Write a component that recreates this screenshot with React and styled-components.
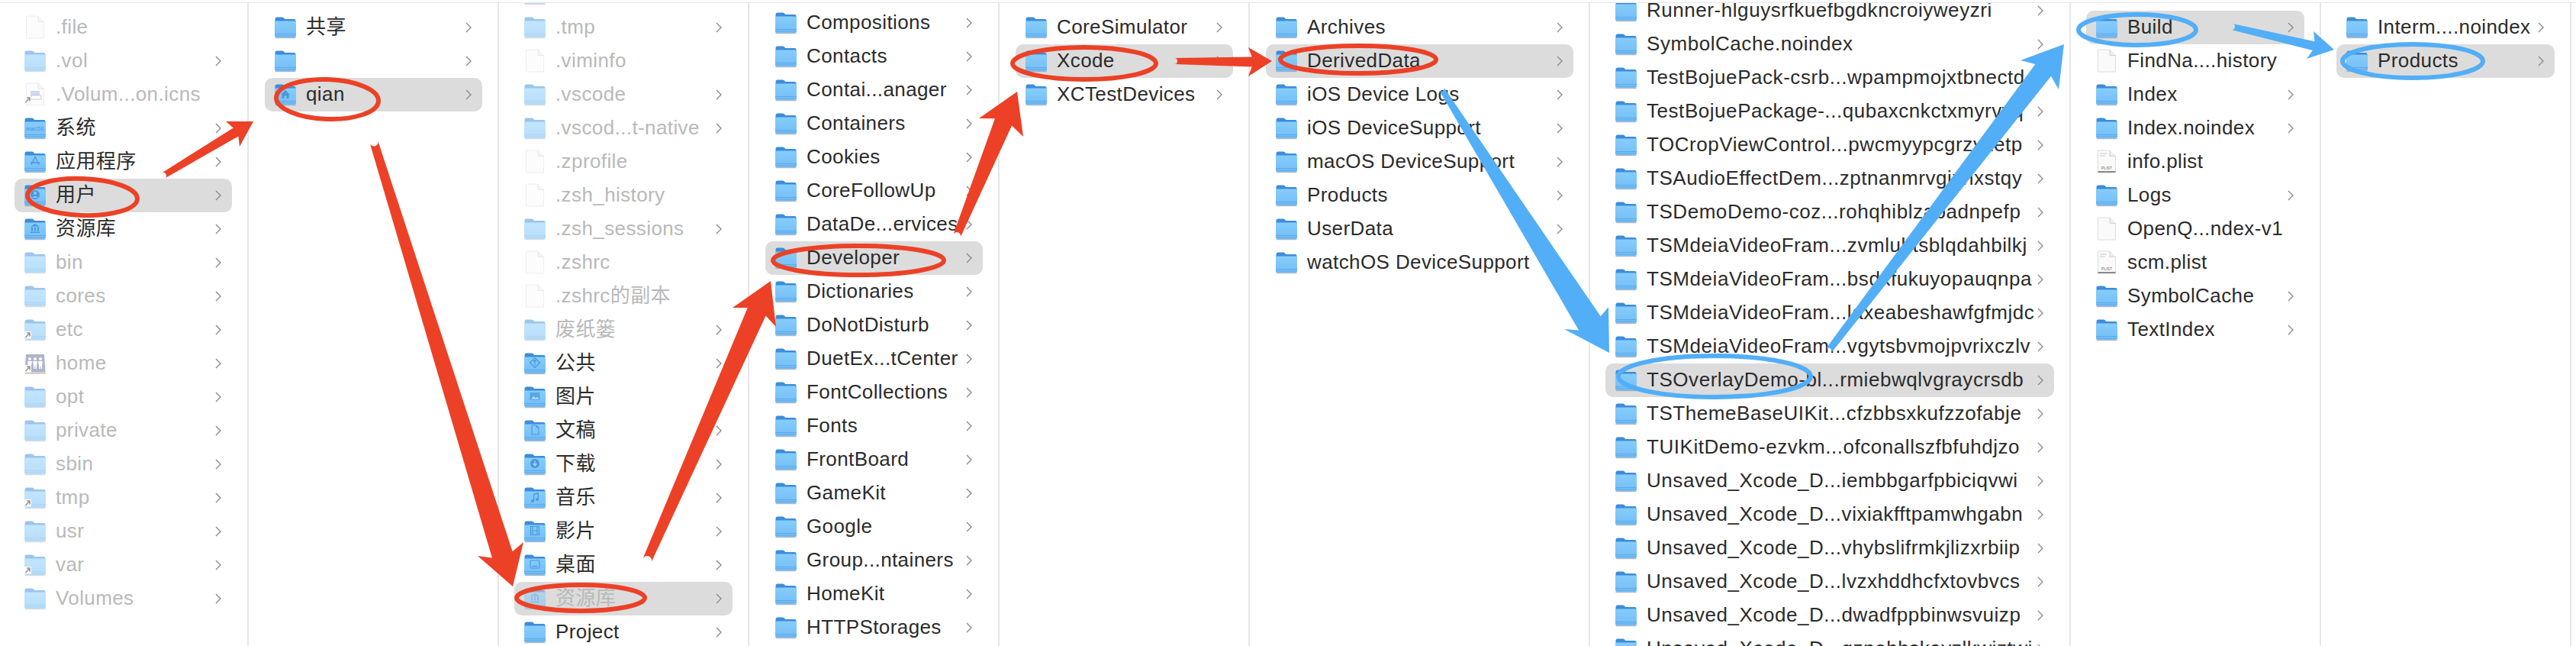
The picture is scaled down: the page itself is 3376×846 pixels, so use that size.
import styled, { createGlobalStyle } from 'styled-components'

const GlobalStyle = createGlobalStyle`
  html, body { margin: 0; padding: 0; background: #fff; }
  body { font-family: "Liberation Sans", "Noto Sans CJK SC", sans-serif; }
`

const RED = '#ec4126'
const BLUE = '#52aef7'

const Page = styled('div')`
  position: relative;
  width: 3376px;
  height: 846px;
  overflow: hidden;
  background: #fff;
`
const Browser = styled('div')`
  display: flex;
  height: 843px;
  margin-top: 3px;
  border-top: solid 1px #e8e3ee;
  box-sizing: border-box;
`
const Column = styled('div')`
  flex: none;
  width: ${(props) => props.$width}px;
  height: 100%;
  box-sizing: border-box;
  border-right: solid 2px #e6e6e8;
  overflow: hidden;
`
const List = styled('div')`
  display: flex;
  flex-direction: column;
  margin-top: ${(props) => props.$top}px;
  padding: 0 20px 0 ${(props) => props.$inset}px;
  letter-spacing: ${(props) => props.$tracking ?? 0.4}px;
`
const Row = styled('div')`
  flex: none;
  display: flex;
  align-items: center;
  height: 44px;
  padding: 0 14px 0 13px;
  border-radius: 10px;
  background: ${(props) => (props.$selected ? '#dcdcdc' : 'transparent')};
`
const IconSlot = styled('span')`
  flex: none;
  display: flex;
  width: 28px;
  height: 32px;
  margin-right: 13px;
  opacity: ${(props) => (props.$dim ? 0.5 : 1)};
`
const Name = styled('span')`
  flex: 1;
  min-width: 0;
  white-space: nowrap;
  font-size: 26px;
  line-height: 30px;
  margin-top: -2px;
  color: ${(props) => (props.$dim ? '#b9b9b9' : '#2b2b2b')};
`
const Chevron = styled('svg')`
  flex: none;
  width: 8px;
  height: 14px;
`
const Annotations = styled('svg')`
  position: absolute;
  top: 0;
  left: 0;
  pointer-events: none;
`

const SymlinkBadge = () => (
  <g>
    <rect x="0" y="18" width="9" height="9.5" rx="1" fill="#fff" />
    <path d="M1.5 26 L6.5 20.5 M3 20 H7 V24.5" fill="none" stroke="#333" strokeWidth="1.7" />
  </g>
)

const glyphs = {
  macos: (
    <text x="14" y="18.5" textAnchor="middle" fontSize="6.5" fill="#3f8fd8" fontFamily="Liberation Sans, sans-serif">
      macOS
    </text>
  ),
  apps: <path d="M14 9 L9 20 M14 9 L19 20 M8 17 H20" fill="none" stroke="#4a98de" strokeWidth="1.3" />,
  user: (
    <g fill="#4a98de">
      <circle cx="14" cy="15" r="6" />
      <circle cx="14" cy="13" r="2" fill="#8ecdfa" />
      <path d="M10 19 q4 -4 8 0 z" fill="#8ecdfa" />
    </g>
  ),
  library: <path d="M14 9 L20 12.5 H8 Z M9 13.5 h2 v5 h-2 Z M13 13.5 h2 v5 h-2 Z M17 13.5 h2 v5 h-2 Z M8 19.5 h12 v1.5 h-12 Z" fill="#4a98de" />,
  home: <path d="M14 10 L20 16 H18.5 V21 H15.5 V17.5 H12.5 V21 H9.5 V16 H8 Z" fill="#4a98de" />,
  publicFolder: (
    <g fill="none" stroke="#4a98de" strokeWidth="1.2">
      <path d="M14 8.5 L20.5 15 L14 21.5 L7.5 15 Z" />
      <path d="M14 18.5 V12 M12 13.5 L14 11.5 L16 13.5" />
    </g>
  ),
  pictures: (
    <g>
      <rect x="7.5" y="10" width="13" height="10" rx="1" fill="#4a98de" opacity="0.75" />
      <path d="M9 19 L12.5 14.5 L15 17 L17 15.5 L19.5 19 Z" fill="#a6d8fb" />
    </g>
  ),
  docs: <path d="M10 9 H16 L19 12 V21 H10 Z M16 9 V12 H19" fill="none" stroke="#4a98de" strokeWidth="1.1" />,
  downloads: (
    <g>
      <circle cx="14" cy="15" r="6" fill="#4a98de" />
      <path d="M14 11.5 V17 M11.5 15 L14 17.8 L16.5 15" fill="none" stroke="#a6d8fb" strokeWidth="1.4" />
    </g>
  ),
  music: (
    <g fill="#4a98de">
      <path d="M12 10.5 L19 9 V18 H17.8 V11 L13.2 12 V20 H12 Z" />
      <circle cx="11" cy="20" r="2" />
      <circle cx="17" cy="18" r="2" />
    </g>
  ),
  movies: <path d="M8.5 9.5 H19.5 V20.5 H8.5 Z M11 9.5 V20.5 M17 9.5 V20.5 M11 15 H17" fill="none" stroke="#4a98de" strokeWidth="1.2" />,
  desktop: (
    <g fill="none" stroke="#4a98de" strokeWidth="1.2">
      <rect x="8" y="10" width="12" height="10" rx="1" />
      <path d="M10.5 17.5 H17.5" />
    </g>
  ),
}

const Folder = ({ glyph, link }) => (
  <svg viewBox="0 0 28 32" width="28" height="32">
    <defs>
      <linearGradient id="folderBody" x1="0" y1="0" x2="0" y2="1">
        <stop offset="0" stopColor="#86cdfb" />
        <stop offset="1" stopColor="#74bdf6" />
      </linearGradient>
    </defs>
    <path d="M0.5 8 V5 Q0.5 2.5 3 2.5 H9.5 Q11 2.5 12 3.6 L13.2 5 H25.5 Q27.5 5 27.5 7 V12 H0.5 Z" fill="#3c8ddb" />
    <rect x="0" y="7.5" width="28" height="21.5" rx="2" fill="url(#folderBody)" />
    <rect x="0" y="24" width="28" height="0.9" fill="#5ba8ea" />
    <rect x="0" y="26.5" width="28" height="0.9" fill="#5ba8ea" />
    <rect x="0.5" y="29" width="27" height="1.2" fill="#8f9aa6" opacity="0.7" />
    {glyph && glyphs[glyph]}
    {link && <SymlinkBadge />}
  </svg>
)

const Sheet = ({ plist, link, preview }) => (
  <svg viewBox="0 0 28 32" width="28" height="32">
    <path d="M2.5 1 H18 L25.5 8.5 V30 H2.5 Z" fill="#fafafa" stroke="#dedede" strokeWidth="1" />
    <path d="M18 1 V8.5 H25.5" fill="#efefef" stroke="#d2d2d2" strokeWidth="1" />
    {plist && (
      <g>
        <path d="M5 5 H14 M5 8 H12" stroke="#c9c9c9" strokeWidth="1" />
        <rect x="2.5" y="28" width="23" height="2" fill="#888" />
        <text x="14" y="25.5" textAnchor="middle" fontSize="5" letterSpacing="0" fill="#666" fontFamily="Liberation Sans, sans-serif">
          PLIST
        </text>
      </g>
    )}
    {preview && (
      <g>
        <rect x="8" y="11" width="12" height="9" fill="#9fb6e8" />
        <rect x="9" y="17" width="13" height="5" fill="#fff" stroke="#777" strokeWidth="0.7" />
      </g>
    )}
    {link && <SymlinkBadge />}
  </svg>
)

const HomeDisk = () => (
  <svg viewBox="0 0 28 32" width="28" height="32">
    <path d="M2 4 H26 L27.5 27 H0.5 Z" fill="#5e6f9c" />
    <rect x="0.5" y="27" width="27" height="3" fill="#a9a29a" />
    <g fill="#fff">
      <circle cx="7" cy="10" r="2" />
      <path d="M4 13 h6 l-1 6 v4 h-1.5 v-3.5 h-1 v3.5 h-1.5 v-4 z" />
      <circle cx="14" cy="10" r="2" />
      <path d="M11 13 h6 l-1 6 v4 h-1.5 v-3.5 h-1 v3.5 h-1.5 v-4 z" />
      <circle cx="21" cy="10" r="2" />
      <path d="M18 13 h6 l-1 6 v4 h-1.5 v-3.5 h-1 v3.5 h-1.5 v-4 z" />
    </g>
    <SymlinkBadge />
  </svg>
)

const EntryIcon = ({ kind, glyph, link }) => {
  if (kind === 'file') return <Sheet link={link} />
  if (kind === 'plist') return <Sheet plist />
  if (kind === 'alias') return <Sheet preview link />
  if (kind === 'disk') return <HomeDisk />
  return <Folder glyph={glyph} link={link} />
}

const Entry = ({ item }) => {
  const { name, kind, glyph, link, selected, dim } = item
  const isFile = kind === 'file' || kind === 'plist' || kind === 'alias'
  return (
    <Row $selected={selected}>
      <IconSlot $dim={dim}>
        <EntryIcon kind={kind} glyph={glyph} link={link} />
      </IconSlot>
      <Name $dim={dim}>{name}</Name>
      {!isFile && (
        <Chevron viewBox="0 0 8 14">
          <path d="M1 1 L7 7 L1 13" fill="none" stroke="#8b8b8b" strokeWidth="1.4" />
        </Chevron>
      )}
    </Row>
  )
}

const columns = [
  {
    width: 326,
    top: 10,
    inset: 19,
    items: [
      { name: '.file', kind: 'file', dim: true },
      { name: '.vol', dim: true },
      { name: '.Volum...on.icns', kind: 'alias', dim: true },
      { name: '系统', glyph: 'macos' },
      { name: '应用程序', glyph: 'apps' },
      { name: '用户', glyph: 'user', selected: true },
      { name: '资源库', glyph: 'library' },
      { name: 'bin', dim: true },
      { name: 'cores', dim: true },
      { name: 'etc', dim: true, link: true },
      { name: 'home', kind: 'disk', dim: true },
      { name: 'opt', dim: true },
      { name: 'private', dim: true },
      { name: 'sbin', dim: true },
      { name: 'tmp', dim: true, link: true },
      { name: 'usr', dim: true },
      { name: 'var', dim: true, link: true },
      { name: 'Volumes', dim: true },
    ],
  },
  {
    width: 328,
    top: 10,
    inset: 21,
    items: [
      { name: '共享' },
      { name: '' },
      { name: 'qian', glyph: 'home', selected: true },
    ],
  },
  {
    width: 328,
    top: -34,
    inset: 20,
    items: [
      { name: '', dim: true },
      { name: '.tmp', dim: true },
      { name: '.viminfo', kind: 'file', dim: true },
      { name: '.vscode', dim: true },
      { name: '.vscod...t-native', dim: true },
      { name: '.zprofile', kind: 'file', dim: true },
      { name: '.zsh_history', kind: 'file', dim: true },
      { name: '.zsh_sessions', dim: true },
      { name: '.zshrc', kind: 'file', dim: true },
      { name: '.zshrc的副本', kind: 'file', dim: true },
      { name: '废纸篓', dim: true },
      { name: '公共', glyph: 'publicFolder' },
      { name: '图片', glyph: 'pictures' },
      { name: '文稿', glyph: 'docs' },
      { name: '下载', glyph: 'downloads' },
      { name: '音乐', glyph: 'music' },
      { name: '影片', glyph: 'movies' },
      { name: '桌面', glyph: 'desktop' },
      { name: '资源库', glyph: 'library', dim: true, selected: true },
      { name: 'Project' },
    ],
  },
  {
    width: 328,
    top: 4,
    inset: 21,
    items: [
      { name: 'Compositions' },
      { name: 'Contacts' },
      { name: 'Contai...anager' },
      { name: 'Containers' },
      { name: 'Cookies' },
      { name: 'CoreFollowUp' },
      { name: 'DataDe...ervices' },
      { name: 'Developer', selected: true },
      { name: 'Dictionaries' },
      { name: 'DoNotDisturb' },
      { name: 'DuetEx...tCenter' },
      { name: 'FontCollections' },
      { name: 'Fonts' },
      { name: 'FrontBoard' },
      { name: 'GameKit' },
      { name: 'Google' },
      { name: 'Group...ntainers' },
      { name: 'HomeKit' },
      { name: 'HTTPStorages' },
    ],
  },
  {
    width: 328,
    top: 10,
    inset: 21,
    items: [
      { name: 'CoreSimulator' },
      { name: 'Xcode', selected: true },
      { name: 'XCTestDevices' },
    ],
  },
  {
    width: 446,
    top: 10,
    inset: 21,
    items: [
      { name: 'Archives' },
      { name: 'DerivedData', selected: true },
      { name: 'iOS Device Logs' },
      { name: 'iOS DeviceSupport' },
      { name: 'macOS DeviceSupport' },
      { name: 'Products' },
      { name: 'UserData' },
      { name: 'watchOS DeviceSupport' },
    ],
  },
  {
    width: 630,
    top: -12,
    inset: 20,
    tracking: 0.55,
    items: [
      { name: 'Runner-hlguysrfkuefbgdkncroiyweyzri' },
      { name: 'SymbolCache.noindex' },
      { name: 'TestBojuePack-csrb...wpampmojxtbnectd' },
      { name: 'TestBojuePackage-...qubaxcnkctxmyrvyq' },
      { name: 'TOCropViewControl...pwcmyypcgrzyxetp' },
      { name: 'TSAudioEffectDem...zptnanmrvgixnxstqy' },
      { name: 'TSDemoDemo-coz...rohqhiblzabadnpefp' },
      { name: 'TSMdeiaVideoFram...zvmlubtsblqdahbilkj' },
      { name: 'TSMdeiaVideoFram...bsdxfukuyopauqnpa' },
      { name: 'TSMdeiaVideoFram...laxeabeshawfgfmjdc' },
      { name: 'TSMdeiaVideoFram...vgytsbvmojpvrixczlv' },
      { name: 'TSOverlayDemo-bl...rmiebwqlvgraycrsdb', selected: true },
      { name: 'TSThemeBaseUIKit...cfzbbsxkufzzofabje' },
      { name: 'TUIKitDemo-ezvkm...ofconallszfbfuhdjzo' },
      { name: 'Unsaved_Xcode_D...iembbgarfpbiciqvwi' },
      { name: 'Unsaved_Xcode_D...vixiakfftpamwhgabn' },
      { name: 'Unsaved_Xcode_D...vhybslifrmkjlizxrbiip' },
      { name: 'Unsaved_Xcode_D...lvzxhddhcfxtovbvcs' },
      { name: 'Unsaved_Xcode_D...dwadfppbinwsvuizp' },
      { name: 'Unsaved_Xcode_D...gznohhskavzlkwiztwi' },
    ],
  },
  {
    width: 328,
    top: 10,
    inset: 20,
    items: [
      { name: 'Build', selected: true },
      { name: 'FindNa....history', kind: 'file' },
      { name: 'Index' },
      { name: 'Index.noindex' },
      { name: 'info.plist', kind: 'plist' },
      { name: 'Logs' },
      { name: 'OpenQ...ndex-v1', kind: 'file' },
      { name: 'scm.plist', kind: 'plist' },
      { name: 'SymbolCache' },
      { name: 'TextIndex' },
    ],
  },
  {
    width: 328,
    top: 10,
    inset: 20,
    items: [
      { name: 'Interm....noindex' },
      { name: 'Products', selected: true },
    ],
  },
]

// tapered markup arrow, wider toward the head
const arrowPath = ({ from, to, wings, tail, neck }) => {
  const [x1, y1] = from
  const [x2, y2] = to
  const length = Math.hypot(x2 - x1, y2 - y1)
  const ux = (x2 - x1) / length
  const uy = (y2 - y1) / length
  const nx = -uy
  const ny = ux
  const side = (p) => (p[0] - x2) * nx + (p[1] - y2) * ny
  const [wingA, wingB] = side(wings[0]) > 0 ? wings : [wings[1], wings[0]]
  const midX = (wingA[0] + wingB[0]) / 2
  const midY = (wingA[1] + wingB[1]) / 2
  const notch = Math.hypot(x2 - midX, y2 - midY) * 0.15
  const cx = midX + ux * notch
  const cy = midY + uy * notch
  const pt = (x, y, offset) => `${x + nx * offset} ${y + ny * offset}`
  return [
    `M${pt(x1, y1, tail / 2)}`,
    `L${pt(cx, cy, neck / 2)}`,
    `L${wingA[0]} ${wingA[1]}`,
    `L${x2} ${y2}`,
    `L${wingB[0]} ${wingB[1]}`,
    `L${pt(cx, cy, -neck / 2)}`,
    `L${pt(x1, y1, -tail / 2)}`,
    `A${tail / 2} ${tail / 2} 0 0 1 ${pt(x1, y1, tail / 2)}`,
    'Z',
  ].join(' ')
}

const arrows = [
  { color: RED, from: [214, 230], to: [332, 159], wings: [[296, 159], [314, 192]], tail: 8, neck: 13 },
  { color: RED, from: [490, 186], to: [672, 768], wings: [[626, 728], [686, 710]], tail: 11, neck: 28 },
  { color: RED, from: [848, 734], to: [1010, 368], wings: [[960, 403], [1017, 428]], tail: 12, neck: 26 },
  { color: RED, from: [1254, 309], to: [1333, 120], wings: [[1283, 155], [1341, 179]], tail: 10, neck: 24 },
  { color: RED, from: [1539, 80], to: [1667, 80], wings: [[1636, 62], [1636, 100]], tail: 8, neck: 13 },
  { color: BLUE, from: [1889, 116], to: [2109, 462], wings: [[2050, 431], [2108, 402]], tail: 7, neck: 34 },
  { color: BLUE, from: [2396, 460], to: [2705, 58], wings: [[2648, 79], [2698, 117]], tail: 9, neck: 26 },
  { color: BLUE, from: [2925, 35], to: [3059, 65], wings: [[3032, 41], [3023, 77]], tail: 8, neck: 12 },
]

const rings = [
  { color: RED, cx: 108, cy: 258, rx: 72, ry: 24, tilt: 2 },
  { color: RED, cx: 429, cy: 130, rx: 67, ry: 26, tilt: 2 },
  { color: RED, cx: 761, cy: 783, rx: 84, ry: 17, tilt: 0 },
  { color: RED, cx: 1125, cy: 341, rx: 112, ry: 19, tilt: 0 },
  { color: RED, cx: 1421, cy: 83, rx: 94, ry: 21, tilt: 0 },
  { color: RED, cx: 1780, cy: 78, rx: 102, ry: 18, tilt: 0 },
  { color: BLUE, cx: 2247, cy: 493, rx: 126, ry: 27, tilt: 0 },
  { color: BLUE, cx: 2801, cy: 39, rx: 77, ry: 20, tilt: 0 },
  { color: BLUE, cx: 3162, cy: 80, rx: 92, ry: 22, tilt: 0 },
]

export default function App() {
  return (
    <Page>
      <GlobalStyle />
      <Browser>
        {columns.map((column, index) => (
          <Column key={index} $width={column.width}>
            <List $top={column.top} $inset={column.inset} $tracking={column.tracking}>
              {column.items.map((item, rowIndex) => (
                <Entry key={rowIndex} item={item} />
              ))}
            </List>
          </Column>
        ))}
      </Browser>
      <Annotations width="3376" height="846" viewBox="0 0 3376 846">
        {rings.map((ring, index) => (
          <ellipse
            key={index}
            cx={ring.cx}
            cy={ring.cy}
            rx={ring.rx}
            ry={ring.ry}
            fill="none"
            stroke={ring.color}
            strokeWidth="6"
            transform={`rotate(${ring.tilt} ${ring.cx} ${ring.cy})`}
          />
        ))}
        {arrows.map((arrow, index) => (
          <path key={index} d={arrowPath(arrow)} fill={arrow.color} />
        ))}
      </Annotations>
    </Page>
  )
}
